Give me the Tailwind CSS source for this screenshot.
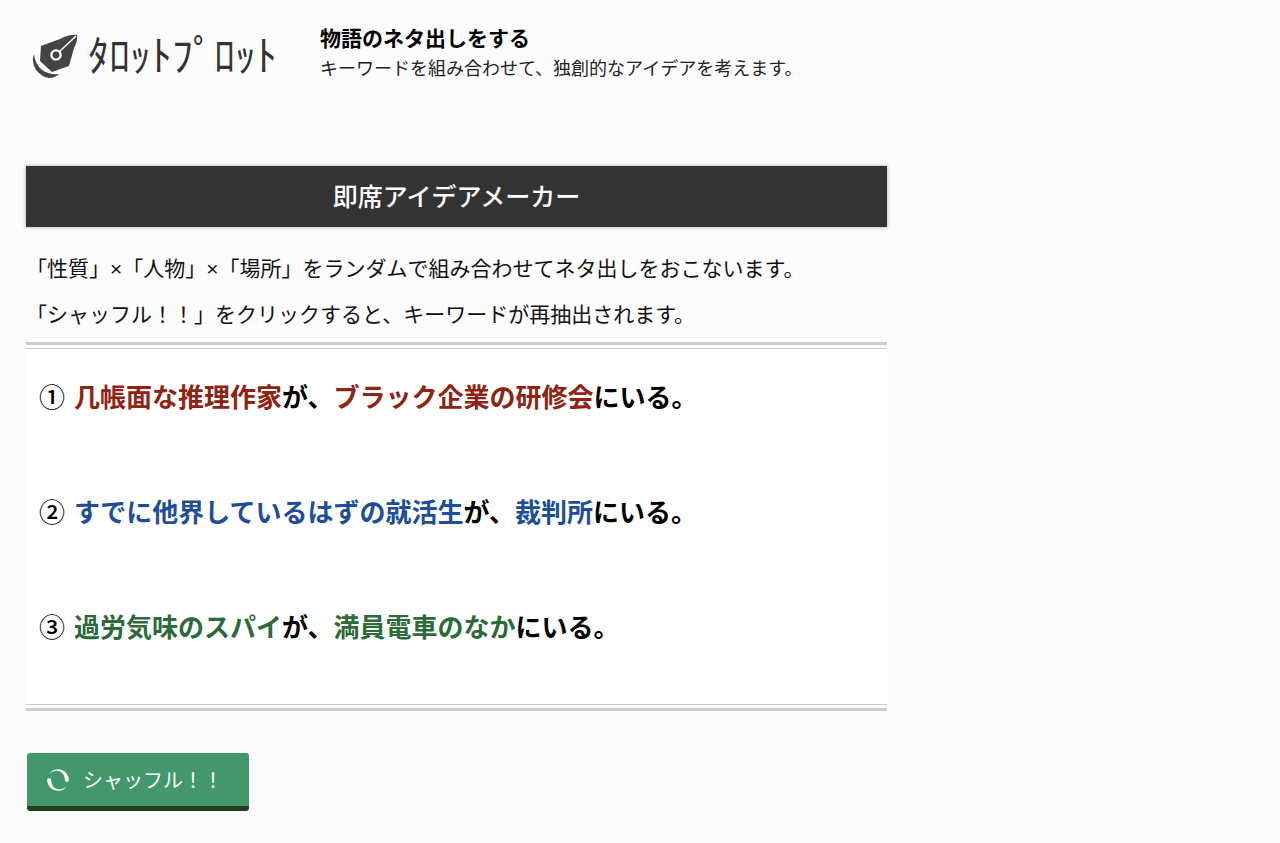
<!DOCTYPE html>
<html lang="ja">
<head>
    <meta charset="UTF-8">
    <meta name="viewport" content="width=device-width, initial-scale=1.0">
    <title>即席アイデアメーカー | タロットプロット</title>
    <script src="https://cdn.jsdelivr.net/npm/@tailwindcss/browser@4"></script>
</head>
<body class="bg-[#fcfcfc] min-h-screen text-black font-['Noto_Sans_CJK_JP',sans-serif]">
    <header class="flex items-start pl-8 pt-[23px]">
        <a href="#" aria-label="タロットプロット" class="flex items-center gap-2 w-72 h-16 shrink-0 text-[#333333]">
            <svg class="w-12 h-12 shrink-0" viewBox="0 0 48 48" aria-hidden="true">
                <path fill="#444444" d="M9 15 L28 8 Q38 3 45 4 Q46 10 42 17 L37 35 L20 41 L8 30 Z"/>
                <path fill="none" stroke="#fcfcfc" stroke-width="1.6" d="M27 21 L44 5"/>
                <circle cx="24" cy="24" r="4.6" fill="#444444" stroke="#fcfcfc" stroke-width="2.4"/>
                <path fill="#444444" d="M2 23 Q3 33 10 39 Q17 44 27 43 Q23 47 17 47 Q10 46 4 39 Q-1 31 2 23 Z"/>
            </svg>
            <span class="pb-1 text-[42px] leading-none font-normal whitespace-nowrap">ﾀﾛｯﾄﾌﾟﾛｯﾄ</span>
        </a>
        <div>
            <p class="text-[21px] leading-7 font-bold">物語のネタ出しをする</p>
            <p class="text-[18px] leading-8 text-[#222222]">キーワードを組み合わせて、独創的なアイデアを考えます。</p>
        </div>
    </header>

    <main class="max-w-[887px] pl-[26px] pt-[79px]">
        <h1 class="bg-[#333333] text-white text-[25px] leading-[59px] pb-0.5 font-medium text-center shadow-[0_0_4px_rgba(0,0,0,0.35)]">即席アイデアメーカー</h1>

        <div class="pt-[18px] pb-[7px] text-[21px] leading-[44px] text-[#111111] whitespace-nowrap">
            <p>「性質」<span class="font-['Liberation_Sans']">×</span>「人物」<span class="font-['Liberation_Sans']">×</span>「場所」をランダムで組み合わせてネタ出しをおこないます。</p>
            <p>「シャッフル！！」をクリックすると、キーワードが再抽出されます。</p>
        </div>

        <div class="border-y-3 border-[#cccccc] py-[3px]">
            <ol class="bg-white border-y border-[#cccccc] px-[13px] pt-[27px] pb-[58px] space-y-[75px] text-[26px] leading-10 font-bold">
                <li><span class="font-medium mr-[3px]">①</span> <span class="text-[#8f2314]">几帳面な推理作家</span>が、<span class="text-[#8f2314]">ブラック企業の研修会</span>にいる。</li>
                <li><span class="font-medium mr-[3px]">②</span> <span class="text-[#1f4e99]">すでに他界しているはずの就活生</span>が、<span class="text-[#1f4e99]">裁判所</span>にいる。</li>
                <li><span class="font-medium mr-[3px]">③</span> <span class="text-[#2c6b39]">過労気味のスパイ</span>が、<span class="text-[#2c6b39]">満員電車のなか</span>にいる。</li>
            </ol>
        </div>

        <button type="button" class="mt-[42px] ml-px flex items-center gap-[14px] h-[58px] pl-5 pr-[26px] rounded-[3px] bg-[#43976a] border-b-5 border-[#24401a] text-white text-[20px] cursor-pointer">
            <svg class="w-[22px] h-[22px]" viewBox="0 0 22 22" aria-hidden="true">
                <path fill="#ffffff" d="M2 5 A10.800 10.800 0 0 1 21.800 11 Q21.800 13 20 13 Q18 13 18 11 Q17.500 2 9 1.500 Q5 2 2 5 Z"/>
                <path fill="#ffffff" d="M20 17 A10.800 10.800 0 0 1 0.200 11 Q0.200 9 2 9 Q4 9 4 11 Q4.500 20 13 20.500 Q17 20 20 17 Z"/>
            </svg>
            シャッフル！！
        </button>
    </main>
</body>
</html>
